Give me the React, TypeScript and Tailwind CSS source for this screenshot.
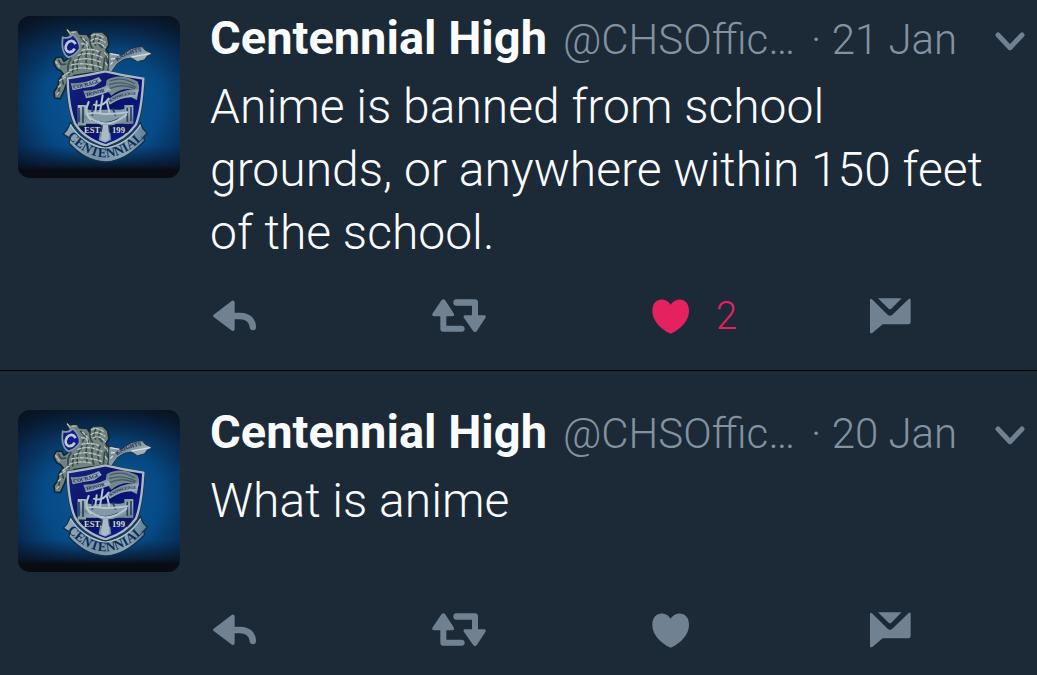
import { useId, useState } from "react";

interface Tweet {
    id: number;
    name: string;
    handle: string;
    date: string;
    dateTime: string;
    text: string;
    likes: number;
}

const tweets: Tweet[] = [
    {
        id: 2,
        name: "Centennial High",
        handle: "@CHSOffic…",
        date: "21 Jan",
        dateTime: "01-21",
        text: "Anime is banned from school grounds, or anywhere within 150 feet of the school.",
        likes: 2,
    },
    {
        id: 1,
        name: "Centennial High",
        handle: "@CHSOffic…",
        date: "20 Jan",
        dateTime: "01-20",
        text: "What is anime",
        likes: 0,
    },
];

function ReplyIcon() {
    return (
        <svg viewBox="0 0 129 96" className="w-[43px] h-8" fill="currentColor" aria-hidden="true">
            <path d="M2 44 L57 2 Q65 -1 65 8 V38 H82 C112 39 129 55 129 82 Q129 91 120 91 Q111 91 110 82 C108 66 98 58 80 58 H65 V86 Q65 95 57 92 L2 51 Q-2 47 2 44Z" />
        </svg>
    );
}

function RetweetIcon() {
    return (
        <svg viewBox="0 0 162 102" className="w-[54px] h-[34px]" fill="currentColor" aria-hidden="true">
            <path d="M29 3 Q34 -1 39 3 L65 43 Q69 52 60 52 H43 V80 H89 Q98 81 98 89 Q98 98 89 98 H34 Q25 98 25 89 V52 H7 Q-2 52 2 43Z" />
            <path d="M73 1 H128 Q138 1 138 11 V49 H155 Q164 49 160 57 L134 97 Q129 102 124 97 L96 57 Q92 49 100 49 H120 V20 H73 Q64 20 64 11 Q64 1 73 1Z" />
        </svg>
    );
}

function HeartIcon() {
    return (
        <svg viewBox="-4 0 114 105" className="w-[38px] h-[35px]" fill="currentColor" aria-hidden="true">
            <path d="M55 18 C66 -5 110 -8 110 36 C110 66 83 91 58 103 Q55 105 52 103 C27 91 0 66 0 36 C0 -8 44 -5 55 18Z" />
        </svg>
    );
}

function MessageIcon() {
    return (
        <svg viewBox="0 0 123 108" className="w-[41px] h-9" fill="currentColor" aria-hidden="true">
            <path d="M24 1 H95 L64 32 Q60 36 56 32Z" />
            <path d="M0 7 Q0 0 6 4 L53 50 Q60 56 67 50 L116 3 Q122 -1 122 6 V72 Q122 79 115 79 H38 L7 105 Q0 109 0 101Z" />
        </svg>
    );
}

function ChevronIcon() {
    return (
        <svg viewBox="0 0 90 57" className="w-[30px] h-[19px]" fill="none" stroke="currentColor" strokeWidth="15" strokeLinecap="round" strokeLinejoin="round" aria-hidden="true">
            <path d="M9 9 L45 47 L81 9" />
        </svg>
    );
}

function SchoolCrest() {
    const id = useId();
    return (
        <svg viewBox="24 24 486 486" className="size-full" role="img" aria-label="Centennial High">
            <defs>
                <radialGradient id={`${id}bg`} cx="0.52" cy="0.54" r="0.72">
                    <stop offset="0" stopColor="#075a9b" />
                    <stop offset="0.5" stopColor="#064b86" />
                    <stop offset="0.75" stopColor="#07305c" />
                    <stop offset="1" stopColor="#071326" />
                </radialGradient>
                <linearGradient id={`${id}fade`} x1="0" x2="0" y1="0" y2="1">
                    <stop offset="0" stopColor="#0a111b" stopOpacity="0.75" />
                    <stop offset="0.2" stopColor="#081a30" stopOpacity="0.2" />
                    <stop offset="0.4" stopColor="#081a30" stopOpacity="0" />
                    <stop offset="0.8" stopColor="#081a30" stopOpacity="0" />
                    <stop offset="0.92" stopColor="#081322" stopOpacity="0.75" />
                    <stop offset="0.95" stopColor="#090d13" />
                    <stop offset="1" stopColor="#090d13" />
                </linearGradient>
                <linearGradient id={`${id}steel`} x1="0" x2="1" y1="0" y2="1">
                    <stop offset="0" stopColor="#b3c1c6" />
                    <stop offset="0.35" stopColor="#738992" />
                    <stop offset="0.6" stopColor="#a0b2ba" />
                    <stop offset="1" stopColor="#526d7b" />
                </linearGradient>
                <linearGradient id={`${id}scroll`} x1="0" x2="1" y1="0" y2="0">
                    <stop offset="0" stopColor="#8fa9b8" />
                    <stop offset="0.4" stopColor="#7492a6" />
                    <stop offset="0.75" stopColor="#8ba7b7" />
                    <stop offset="1" stopColor="#5d7d93" />
                </linearGradient>
                <linearGradient id={`${id}blue`} x1="0" x2="1" y1="0" y2="1">
                    <stop offset="0" stopColor="#18257d" />
                    <stop offset="0.5" stopColor="#07106a" />
                    <stop offset="1" stopColor="#1020a0" />
                </linearGradient>
                <path id={`${id}arc`} d="M171 386 Q286 512 409 382" />
                <path id={`${id}motto`} d="M190 242 Q226 240 275 220" />
                <path id={`${id}honor`} d="M230 265 Q262 260 300 245" />
                <path id={`${id}learn`} d="M302 283 Q334 258 390 260" />
                <path id={`${id}knights`} d="M322 161 Q352 134 404 130" />
            </defs>
            <rect x="24" y="24" width="486" height="486" fill={`url(#${id}bg)`} />
            <rect x="24" y="24" width="486" height="486" fill={`url(#${id}fade)`} />

            {/* Knight on horseback */}
            <path
                d="M168 56 L180 68 L202 66 L208 78 L231 79 L240 92 L239 80 L249 72 L278 72 L293 87 L297 111 L288 125 L302 143 L301 174 L290 194 L242 195 L192 203 L172 220 L164 244 L151 272 L134 270 L132 251 L143 235 L148 212 L160 198 L152 188 L140 182 L131 165 L137 149 L155 147 L162 160 L184 145 L162 122 L164 91 L176 84Z"
                fill="#71827f"
                stroke="#132636"
                strokeWidth="5"
                strokeLinejoin="round"
            />
            <g fill="none" strokeLinecap="round">
                <path d="M241 89 Q237 112 248 121 M257 83 Q245 98 257 111 M271 88 L264 105 L277 119 M235 117 Q224 139 231 180 M251 127 Q239 148 251 187 M270 132 Q257 157 270 184 M216 133 Q198 154 202 185 M183 153 Q168 170 177 199 M146 157 L154 170 L167 168 M287 132 L293 168 M212 88 L222 100 M228 96 L218 118 M284 150 L280 186 M190 160 L188 192 M156 212 L160 228 M148 240 L146 258" stroke="#35484c" strokeWidth="5" />
                <path d="M172 66 L181 77 M186 73 L199 72 M245 83 Q261 74 283 90 M243 98 Q260 84 285 103 M249 108 Q266 97 286 119 M218 91 L234 108 M214 107 Q238 107 231 126 M216 127 Q246 119 270 133 M204 143 Q231 128 276 148 M194 158 Q229 144 274 163 M184 171 Q220 161 275 178 M178 187 Q214 174 246 184 M158 205 L181 190 M149 218 L166 207 M145 237 L155 228 M141 260 L150 250 M137 160 L148 176 M284 134 L296 150 M286 164 L296 176" stroke="#b9c6c0" strokeWidth="4" strokeDasharray="9 5" />
            </g>
            <path d="M158 88 Q177 94 188 80 Q210 98 209 122 Q197 142 175 148 Q152 134 158 88Z" fill="#141d86" stroke="#8599a6" strokeWidth="5" />
            <path d="M197 108 Q186 90 171 106 Q161 125 175 132 Q188 134 194 122" fill="none" stroke="#bccbd6" strokeWidth="8" />

            {/* Lance and pennant */}
            <path d="M297 133 L335 141 Q362 116 397 116 L406 127 L426 136 L412 144 L403 156 L382 161 L364 150 Q341 150 322 167 L304 192 L294 190Z" fill={`url(#${id}steel)`} stroke="#1f3343" strokeWidth="3" />
            <path d="M301 137 L329 142 M364 147 L421 137 M303 153 L317 151 M301 170 L308 162" stroke="#d1dde1" strokeWidth="4" />
            <text fill="#1b2560" fontFamily="Liberation Serif, serif" fontSize="17" fontWeight="bold">
                <textPath href={`#${id}knights`}>KNIGHTS</textPath>
            </text>

            {/* Shield */}
            <path d="M168 207 Q227 199 286 185 Q345 200 405 208 Q402 310 383 354 Q354 397 287 419 Q216 397 190 350 Q168 300 168 207Z" fill="#233344" />
            <path d="M173 211 Q229 203 286 190 Q344 204 400 212 Q395 306 378 349 Q350 391 287 412 Q221 391 195 346 Q175 300 173 211Z" fill={`url(#${id}blue)`} stroke="#a9b8c3" strokeWidth="7" />
            <g fill={`url(#${id}steel)`}>
                <path d="M203 291 H228 V355 H203Z M343 291 H370 V348 H343Z M225 303 Q286 317 342 303 L349 347 H220Z" />
                <path d="M275 343 H296 L304 396 L286 404 L266 396Z" />
                <path d="M290 216 Q330 193 382 220 Q390 231 386 252 Q344 229 304 263 L286 240Z" fill="#73878f" />
                <path d="M182 225 Q219 229 267 207 L275 219 L253 235 Q219 240 188 247Z" />
                <path d="M220 248 Q256 249 291 232 L304 248 Q275 261 228 271Z" />
                <path d="M292 277 Q335 239 386 244 L381 277 L364 268 Q336 267 299 290Z" />
                <path d="M236 312 Q284 300 352 308 Q336 352 290 354 Q250 352 236 312Z" fill="#8399a5" />
            </g>
            <path d="M207 300 V343 M219 296 V345 M352 299 V341 M363 297 V339 M247 291 V323 M308 301 L317 323 M244 334 Q281 355 326 333 M288 350 L284 396" fill="none" stroke="#233e63" strokeWidth="5" />
            <path d="M236 282 Q220 318 242 334 M260 280 L256 312 M278 262 L270 312 M252 290 Q276 300 296 272 M290 280 L298 312 M231 321 Q284 372 349 320 M229 318 Q255 312 277 317 Q301 320 352 313" fill="none" stroke="#b4c5cd" strokeWidth="6" strokeLinecap="round" />
            <path d="M299 219 Q338 204 375 228 M297 230 Q337 216 378 238 M300 241 Q337 225 375 242" fill="none" stroke="#435c69" strokeWidth="4" />
            <g fill="#14205a" fontFamily="Liberation Serif, serif" fontWeight="bold">
                <text fontSize="16"><textPath href={`#${id}motto`}>COURAGE</textPath></text>
                <text fontSize="15"><textPath href={`#${id}honor`}>HONOR</textPath></text>
                <text fontSize="12"><textPath href={`#${id}learn`}>KNOWLEDGE</textPath></text>
            </g>
            <path d="M206 352 H366 L354 374 H222Z" fill="#0f1a3c" opacity="0.7" />
            <g fill="#d2dce1" fontFamily="Liberation Serif, serif" fontSize="26" fontWeight="bold">
                <text x="222" y="374">EST.</text>
                <text x="306" y="374">199</text>
            </g>
            <path d="M279 350 H294 L299 394 L286 402 L273 394Z" fill="#a9bcc6" />

            {/* Name scroll */}
            <path d="M181 344 L194 365 Q237 414 286 417 Q340 413 382 362 L391 344 L399 362 L412 376 L401 387 L404 398 Q345 460 286 462 Q226 460 177 405 L180 391 L160 378 L171 366Z" fill={`url(#${id}scroll)`} stroke="#142e4b" strokeWidth="4" />
            <path d="M181 349 Q216 407 286 421 Q353 410 392 350" fill="none" stroke="#b0c3cd" strokeWidth="4" />
            <text fill="#0d2c55" fontFamily="Liberation Serif, serif" fontSize="40" fontWeight="bold">
                <textPath href={`#${id}arc`}>CENTENNIAL</textPath>
            </text>
        </svg>
    );
}

function TweetCard({ tweet }: { tweet: Tweet }) {
    const [liked, setLiked] = useState(tweet.likes > 0);

    return (
        <article className="flex items-start gap-[30px] border-b border-black pt-[39px] pb-7 pl-[18px] pr-3 first:pt-4 first:pb-9 last:border-b-0">
            <a href="#profile" className="block size-[162px] shrink-0 overflow-hidden rounded-xl">
                <SchoolCrest />
            </a>

            <div className="min-w-0 flex-1">
                <header className="flex h-[46px] items-center whitespace-nowrap">
                    <div className="flex min-w-0 flex-1 items-baseline">
                        <a href="#profile" className="text-[47px] leading-[44px] font-bold text-[#fafbfd]">{tweet.name}</a>
                        <span className="ml-4 text-[42px] leading-[44px] font-light text-[#8292a1]">{tweet.handle}</span>
                        <span className="ml-4 text-[42px] leading-[44px] font-light text-[#8292a1]">
                            · <time dateTime={tweet.dateTime}>{tweet.date}</time>
                        </span>
                    </div>
                    <button type="button" aria-label="More options" className="mt-1 cursor-pointer text-[#708292]">
                        <ChevronIcon />
                    </button>
                </header>

                <p className="mt-[13px] min-h-[109px] pr-6 text-[48px] leading-[63px] font-light text-[#fafbfd]">{tweet.text}</p>

                {/* Actions */}
                <div className="mt-[34px] grid h-9 grid-cols-[1fr_1fr_1fr_155px] items-center pl-[3px] text-[#708292]">
                    <button type="button" aria-label="Reply" className="cursor-pointer justify-self-start">
                        <ReplyIcon />
                    </button>
                    <button type="button" aria-label="Retweet" className="cursor-pointer justify-self-start">
                        <RetweetIcon />
                    </button>
                    <button
                        type="button"
                        aria-label="Like"
                        aria-pressed={liked}
                        onClick={() => setLiked(!liked)}
                        className={`flex cursor-pointer items-center gap-[27px] justify-self-start ${liked ? "text-[#e6215f]" : ""}`}
                    >
                        <HeartIcon />
                        {tweet.likes > 0 && <span className="text-[38px] leading-9 font-light">{tweet.likes}</span>}
                    </button>
                    <button type="button" aria-label="Direct message" className="cursor-pointer justify-self-start">
                        <MessageIcon />
                    </button>
                </div>
            </div>
        </article>
    );
}

export default function App() {
    return (
        <main className="min-h-screen bg-[#1c2936] font-['Roboto',sans-serif]">
            {tweets.map((tweet) => (
                <TweetCard key={tweet.id} tweet={tweet} />
            ))}
        </main>
    );
}
